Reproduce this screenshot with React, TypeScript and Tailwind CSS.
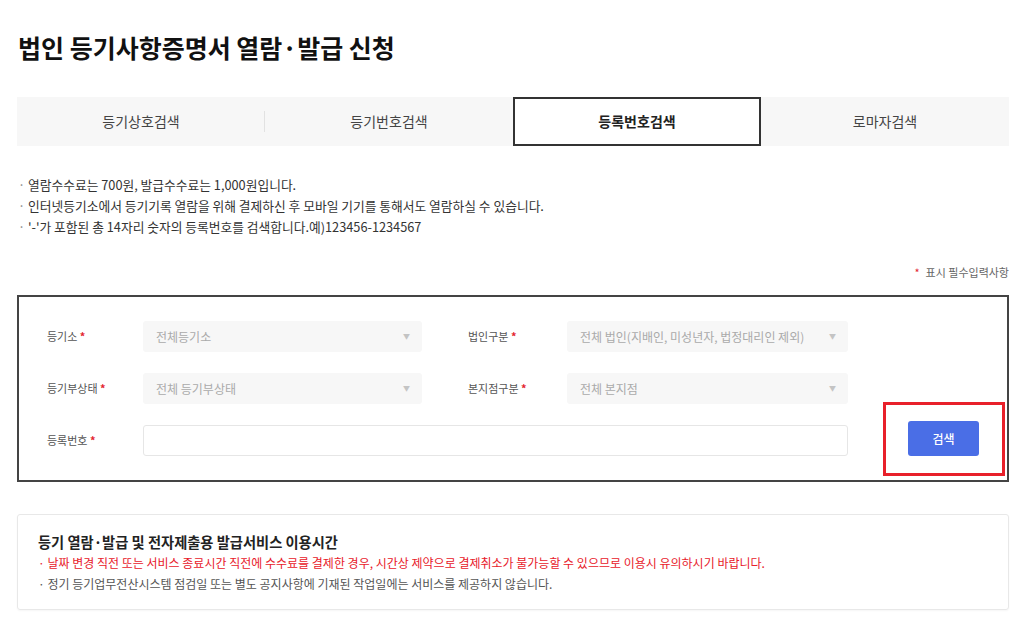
const tabs = ["등기상호검색", "등기번호검색", "등록번호검색", "로마자검색"];
const activeTab = 2;

const notices = [
  "열람수수료는 700원, 발급수수료는 1,000원입니다.",
  "인터넷등기소에서 등기기록 열람을 위해 결제하신 후 모바일 기기를 통해서도 열람하실 수 있습니다.",
  "'-'가 포함된 총 14자리 숫자의 등록번호를 검색합니다.예)123456-1234567",
];

function Label({ text, className = "" }: { text: string; className?: string }) {
  return (
    <div className={"text-[11px] text-[#555] shrink-0 " + className}>
      {text} <span className="text-[#e3262f] font-bold">*</span>
    </div>
  );
}

function SelectBox({ value, width }: { value: string; width: string }) {
  return (
    <div className={"h-[31px] bg-[#f7f7f7] rounded-[3px] flex items-center justify-between pl-[13px] pr-[12px] text-[12px] text-[#aaa] " + width}>
      <span>{value}</span>
      <span className="text-[7px] text-[#c4c4c4] leading-none">▼</span>
    </div>
  );
}

export default function App() {
  return (
    <div
      className="w-[1024px] h-[626px] bg-white pl-[17px] pr-[15px] pt-[29px] text-[#333] overflow-hidden"
      style={{ fontFamily: '"Noto Sans CJK KR", "Noto Sans", sans-serif' }}
    >
      <h1 className="text-[25px] font-bold leading-[36px] text-[#111] pl-px">법인 등기사항증명서 열람·발급 신청</h1>

      {/* 검색 방식 탭 */}
      <div className="mt-[32px] h-[49px] bg-[#f7f7f7] grid grid-cols-4">
        {tabs.map((t, i) => (
          <div key={t} className="relative flex items-center justify-center">
            {i === activeTab ? (
              <div className="absolute inset-0 border-2 border-[#333] bg-white flex items-center justify-center text-[14px] font-bold text-[#222]">
                {t}
              </div>
            ) : (
              <span className="text-[14px] text-[#444]">{t}</span>
            )}
            {i === 0 && <div className="absolute right-0 top-[14px] h-[21px] w-px bg-[#e2e2e2]" />}
          </div>
        ))}
      </div>

      <ul className="mt-[28px] text-[12.75px] leading-[21px] text-[#333] pl-px">
        {notices.map((n) => (
          <li key={n}>
            <span className="text-[#888]">·</span> {n}
          </li>
        ))}
      </ul>

      <div className="mt-[25px] text-right text-[11px] leading-[20px] text-[#666]">
        <span className="text-[#e3262f] mr-[6px]">*</span>표시 필수입력사항
      </div>

      {/* 검색 조건 */}
      <div className="relative mt-[13px] h-[187px] border-2 border-[#444] pt-[24px] pl-[28px]">
        <div className="flex items-center h-[31px]">
          <Label text="등기소" className="w-[96px]" />
          <SelectBox value="전체등기소" width="w-[279px]" />
          <Label text="법인구분" className="w-[99px] ml-[46px]" />
          <SelectBox value="전체 법인(지배인, 미성년자, 법정대리인 제외)" width="w-[281px]" />
        </div>
        <div className="flex items-center h-[31px] mt-[21px]">
          <Label text="등기부상태" className="w-[96px]" />
          <SelectBox value="전체 등기부상태" width="w-[279px]" />
          <Label text="본지점구분" className="w-[99px] ml-[46px]" />
          <SelectBox value="전체 본지점" width="w-[281px]" />
        </div>
        <div className="flex items-end h-[35px] mt-[17px]">
          <div className="flex items-center h-[31px]">
            <Label text="등록번호" className="w-[96px]" />
            <div className="w-[705px] h-[31px] border border-[#e6e6e6] rounded-[3px] bg-white" />
          </div>
          <button className="ml-[60px] w-[71px] h-[35px] rounded-[3px] bg-[#4a6ee6] text-white text-[12px] font-medium">
            검색
          </button>
        </div>
        <div className="absolute left-[864px] top-[105px] w-[122px] h-[74px] border-[3px] border-[#e8202a]" />
      </div>

      {/* 이용시간 안내 */}
      <div className="mt-[32px] h-[96px] border border-[#e8e8e8] rounded-[3px] shadow-[0_1px_2px_rgba(0,0,0,0.04)] pt-[17px] pl-[20px]">
        <div className="text-[14.25px] font-bold leading-[20px] text-[#222]">등기 열람·발급 및 전자제출용 발급서비스 이용시간</div>
        <div className="text-[12px] leading-[21px] text-[#e8202a]">
          · 날짜 변경 직전 또는 서비스 종료시간 직전에 수수료를 결제한 경우, 시간상 제약으로 결제취소가 불가능할 수 있으므로 이용시 유의하시기 바랍니다.
        </div>
        <div className="text-[12px] leading-[21px] text-[#555]">
          · 정기 등기업무전산시스템 점검일 또는 별도 공지사항에 기재된 작업일에는 서비스를 제공하지 않습니다.
        </div>
      </div>
    </div>
  );
}
